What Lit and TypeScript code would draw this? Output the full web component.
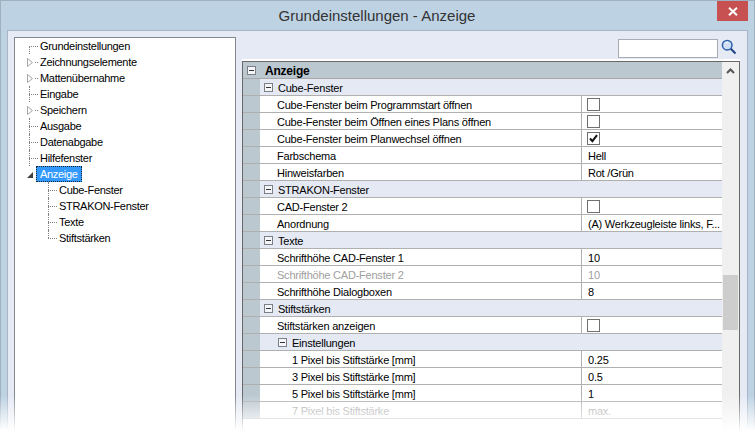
import { LitElement, html, css, svg } from "lit";
import { customElement } from "lit/decorators.js";

type Row =
  | { k: "cat"; label: string; sub?: boolean }
  | { k: "row"; label: string; value?: string; check?: boolean; checked?: boolean; off?: boolean; deep?: boolean };

const rows: Row[] = [
  { k: "cat", label: "Cube-Fenster" },
  { k: "row", label: "Cube-Fenster beim Programmstart öffnen", check: true },
  { k: "row", label: "Cube-Fenster beim Öffnen eines Plans öffnen", check: true },
  { k: "row", label: "Cube-Fenster beim Planwechsel öffnen", check: true, checked: true },
  { k: "row", label: "Farbschema", value: "Hell" },
  { k: "row", label: "Hinweisfarben", value: "Rot /Grün" },
  { k: "cat", label: "STRAKON-Fenster" },
  { k: "row", label: "CAD-Fenster 2", check: true },
  { k: "row", label: "Anordnung", value: "(A) Werkzeugleiste links, F..." },
  { k: "cat", label: "Texte" },
  { k: "row", label: "Schrifthöhe CAD-Fenster 1", value: "10" },
  { k: "row", label: "Schrifthöhe CAD-Fenster 2", value: "10", off: true },
  { k: "row", label: "Schrifthöhe Dialogboxen", value: "8" },
  { k: "cat", label: "Stiftstärken" },
  { k: "row", label: "Stiftstärken anzeigen", check: true },
  { k: "cat", label: "Einstellungen", sub: true },
  { k: "row", label: "1 Pixel bis Stiftstärke [mm]", value: "0.25", deep: true },
  { k: "row", label: "3 Pixel bis Stiftstärke [mm]", value: "0.5", deep: true },
  { k: "row", label: "5 Pixel bis Stiftstärke [mm]", value: "1", deep: true },
  { k: "row", label: "7 Pixel bis Stiftstärke", value: "max.", off: true, deep: true },
];

type Node = { label: string; kind: "leaf" | "closed" | "open" | "child"; sel?: boolean; last?: boolean; first?: boolean };
const tree: Node[] = [
  { label: "Grundeinstellungen", kind: "leaf", first: true },
  { label: "Zeichnungselemente", kind: "closed" },
  { label: "Mattenübernahme", kind: "closed" },
  { label: "Eingabe", kind: "leaf" },
  { label: "Speichern", kind: "closed" },
  { label: "Ausgabe", kind: "leaf" },
  { label: "Datenabgabe", kind: "leaf" },
  { label: "Hilfefenster", kind: "leaf" },
  { label: "Anzeige", kind: "open", sel: true },
  { label: "Cube-Fenster", kind: "child" },
  { label: "STRAKON-Fenster", kind: "child" },
  { label: "Texte", kind: "child" },
  { label: "Stiftstärken", kind: "child", last: true },
];

const minus = html`<svg class="tog" width="9" height="9" viewBox="0 0 9 9"><rect x=".5" y=".5" width="8" height="8" fill="#f4f6fa" stroke="#7b7f86"/><path d="M2 4.500h5" stroke="#333" fill="none"/></svg>`;

@customElement("app-root")
export class AppRoot extends LitElement {
  static styles = css`
    :host {
      display: block;
      position: relative;
      width: 755px;
      height: 435px;
      overflow: hidden;
      font: 11px/16px "Liberation Sans", Arial, sans-serif;
      letter-spacing: -0.3px;
      color: #000;
    }
    .win {
      height: 435px;
      box-sizing: border-box;
      background: #bdd2e3;
      border: 1px solid #9fb0c0;
      border-bottom: 0;
      display: flex;
      flex-direction: column;
    }
    .title {
      height: 29px;
      flex: none;
      display: flex;
      justify-content: center;
      align-items: center;
      font-size: 15px;
      letter-spacing: 0;
      color: #333;
      padding-right: 1px;
    }
    .close {
      position: absolute;
      left: 717px;
      top: 1px;
      width: 31px;
      height: 20px;
      background: #c75050;
      display: flex;
      align-items: center;
      justify-content: center;
    }
    .panel {
      flex: 1;
      min-height: 0;
      margin: 0 6px;
      background: #e6eaf5;
      border: 1px solid #a9b4c6;
      border-bottom: 0;
      display: flex;
      gap: 6px;
      padding: 6px 7px 0 6px;
    }
    .tree {
      width: 222px;
      flex: none;
      box-sizing: border-box;
      background: #fff;
      border: 1px solid #828790;
      border-bottom: 0;
    }
    .node {
      height: 16px;
      position: relative;
      display: flex;
      align-items: center;
      padding-left: 23px;
      white-space: nowrap;
    }
    .node.child { padding-left: 42px; }
    .node .v {
      position: absolute;
      left: 14px;
      top: 0;
      bottom: 0;
      border-left: 1px dotted #808080;
    }
    .node.first .v { top: 8px; }
    .node .h {
      position: absolute;
      left: 14px;
      top: 8px;
      width: 9px;
      border-top: 1px dotted #808080;
    }
    .node.closed .h { left: 20px; width: 3px; }
    .node.child .v { left: 33px; }
    .node.child .h { left: 33px; width: 9px; }
    .node.child.last .v { bottom: 8px; }
    .arrow { position: absolute; left: 12px; top: 3px; }
    .lbl { padding: 0 2px; height: 16px; line-height: 16px; }
    .sel {
      margin-left: -2px;
      padding: 0 4px;
      background: #3399ff;
      color: #fff;
      outline: 1px dotted #10243a;
      outline-offset: -1px;
    }
    .main {
      flex: 1;
      min-width: 0;
      display: flex;
      flex-direction: column;
    }
    .search {
      height: 24px;
      flex: none;
      display: flex;
      justify-content: flex-end;
      align-items: flex-start;
      gap: 3px;
      padding: 2px 3px 0 0;
      box-sizing: border-box;
    }
    .box {
      width: 100px;
      height: 19px;
      box-sizing: border-box;
      background: #fff;
      border: 1px solid #a9acb3;
    }
    .grid {
      flex: 1;
      min-height: 0;
      display: flex;
      border: 1px solid #696969;
      border-bottom: 0;
      box-shadow: 0 -2px 0 #fff;
      background: #fff;
      overflow: hidden;
      letter-spacing: -0.22px;
    }
    .list { flex: 1; min-width: 0; }
    .head {
      height: 16px;
      border-bottom: 1px solid #a8a8a8;
      background: #bcc8d0;
      display: flex;
      align-items: center;
      padding-left: 4px;
      gap: 9px;
      font-weight: 700;
      font-size: 12px;
    }
    .r {
      height: 16px;
      border-bottom: 1px solid #b0b0b0;
      display: flex;
      align-items: center;
      background: linear-gradient(to right, #bcc8d0 17px, #fff 17px);
      white-space: nowrap;
    }
    .r.cat { background: linear-gradient(to right, #bcc8d0 17px, #e4e9f4 17px); }
    .tog { flex: none; }
    .cat .tog { margin-left: 21px; margin-right: 5px; }
    .cat.sub .tog { margin-left: 35px; }
    .name {
      width: 339px;
      box-sizing: border-box;
      padding-left: 34px;
      flex: none;
      height: 16px;
      line-height: 18px;
      overflow: hidden;
      border-right: 1px solid #b0b0b0;
    }
    .cat span, .head span { line-height: 18px; height: 16px; }
    .deep .name { padding-left: 49px; }
    .off { color: #a0a0a0; }
    .val { padding-left: 6px; overflow: hidden; line-height: 18px; height: 16px; }
    .cb {
      display: block;
      margin-left: 5px;
      width: 13px;
      height: 13px;
      flex: none;
    }
    .bar {
      width: 17px;
      flex: none;
      background: #f0f0f0;
      position: relative;
    }
    .up { position: absolute; left: 4px; top: 6px; }
    .thumb {
      position: absolute;
      left: 1px;
      right: 1px;
      top: 213px;
      height: 55px;
      background: #cdcdcd;
    }
    .fade {
      position: absolute;
      left: 0;
      right: 0;
      bottom: 0;
      height: 40px;
      background: linear-gradient(to bottom, rgba(255,255,255,0), #fff 90%);
      pointer-events: none;
    }
  `;

  private node(n: Node) {
    const arrow =
      n.kind === "closed"
        ? svg`<svg class="arrow" width="7" height="11" viewBox="0 0 7 11"><path d="M.5 1.500v8l5-4z" fill="#fff" stroke="#a6a6a6"/></svg>`
        : n.kind === "open"
          ? svg`<svg class="arrow" width="7" height="11" viewBox="0 0 7 11"><path d="M6 3v6H0z" fill="#404040"/></svg>`
          : "";
    return html`<div class="node ${n.kind} ${n.last ? "last" : ""} ${n.first ? "first" : ""}">
      ${n.kind === "leaf" || n.kind === "child" ? html`<i class="v"></i>` : ""}
      ${n.kind === "open" ? "" : html`<i class="h"></i>`}
      ${arrow}
      <span class="lbl ${n.sel ? "sel" : ""}">${n.label}</span>
    </div>`;
  }

  private row(r: Row) {
    if (r.k === "cat") {
      return html`<div class="r cat ${r.sub ? "sub" : ""}">${minus}<span>${r.label}</span></div>`;
    }
    const cb = html`<svg class="cb" viewBox="0 0 13 13"><rect x=".5" y=".5" width="12" height="12" fill="#fff" stroke="#707070"/>${r.checked
      ? svg`<path d="M3 6.500l2.400 2.600L10 3.200" fill="none" stroke="#111" stroke-width="2"/>`
      : ""}</svg>`;
    return html`<div class="r ${r.off ? "off" : ""} ${r.deep ? "deep" : ""}">
      <div class="name">${r.label}</div>
      ${r.check ? cb : html`<div class="val">${r.value}</div>`}
    </div>`;
  }

  render() {
    return html`<div class="win">
        <div class="title">Grundeinstellungen - Anzeige</div>
        <div class="panel">
          <div class="tree">${tree.map((n) => this.node(n))}</div>
          <div class="main">
            <div class="search">
              <div class="box"></div>
              <svg width="16" height="16" viewBox="0 0 16 16">
                <circle cx="6.200" cy="6.200" r="4.800" fill="#cfe0f5" stroke="#2a5ea8" stroke-width="1.500"/>
                <path d="M4 4.500a3 3 0 0 1 3-1.500" stroke="#fff" fill="none"/>
                <path d="M9.800 9.800l4.700 4.700" stroke="#1c4585" stroke-width="2"/>
              </svg>
            </div>
            <div class="grid">
              <div class="list">
                <div class="head">${minus}<span>Anzeige</span></div>
                ${rows.map((r) => this.row(r))}
              </div>
              <div class="bar">
                <svg class="up" width="9" height="6" viewBox="0 0 9 6"><path d="M1 5l3.500-3.500L8 5" fill="none" stroke="#555" stroke-width="2"/></svg>
                <div class="thumb"></div>
              </div>
            </div>
          </div>
        </div>
      </div>
      <div class="close">
        <svg width="10" height="9" viewBox="0 0 10 9"><path d="M1 .8l8 7.400M9 .8L1 8.200" stroke="#fff" stroke-width="2"/></svg>
      </div>
      <div class="fade"></div>`;
  }
}
